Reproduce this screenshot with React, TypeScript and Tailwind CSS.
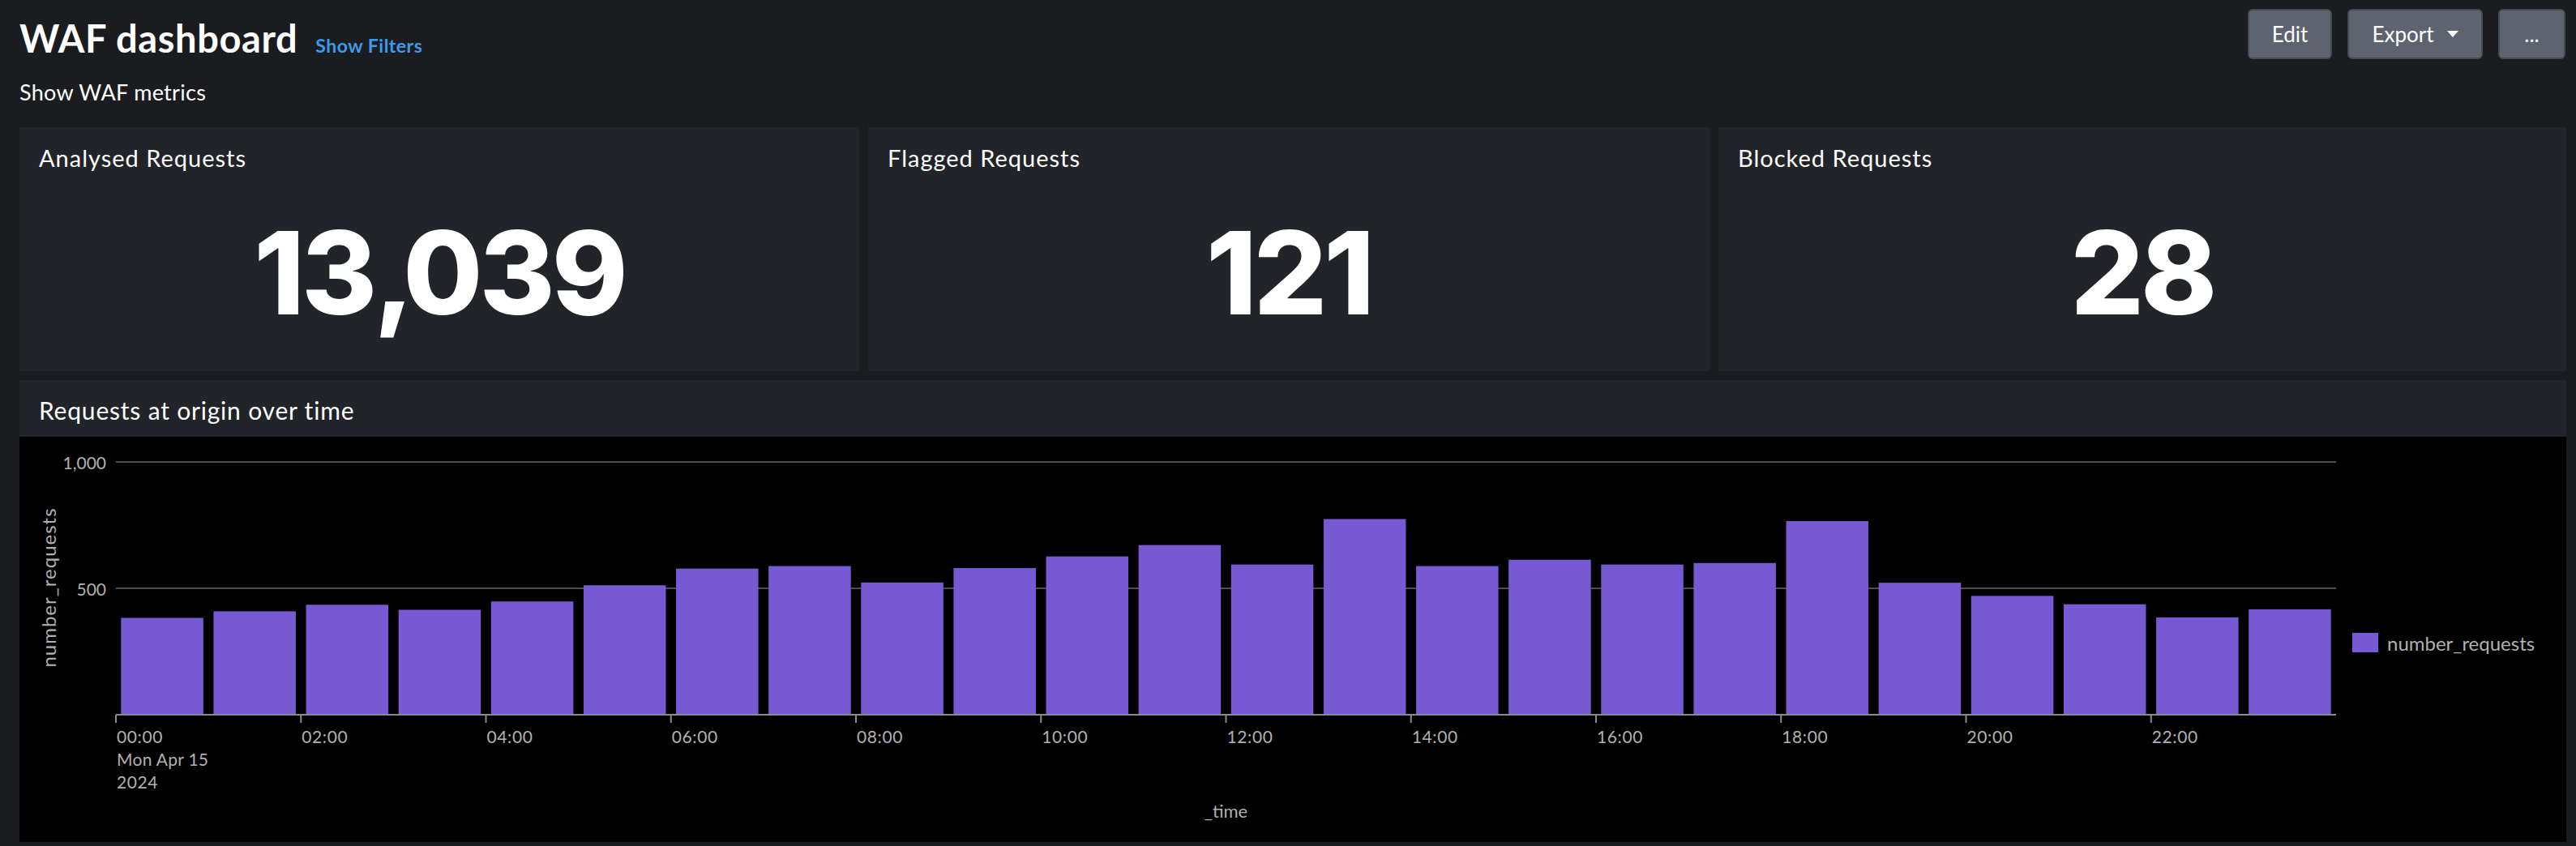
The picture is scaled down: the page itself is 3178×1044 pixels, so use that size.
const values = [
  383, 409, 435, 415, 448, 512, 578, 588, 523, 580, 626, 671, 594, 774, 588,
  613, 594, 600, 766, 522, 470, 437, 385, 417,
];

const stats = [
  { title: "Analysed Requests", value: "13,039" },
  { title: "Flagged Requests", value: "121" },
  { title: "Blocked Requests", value: "28" },
];

const RequestsChart = () => {
  const x0 = 119;
  const x1 = 2858;
  const yTop = 31;
  const yBase = 343;
  const pitch = (x1 - x0) / values.length;
  const k = (yBase - yTop) / 1000;
  const barPad = 6.3;
  const ticks = Array.from({ length: 12 }, (_, i) => i);

  return (
    <svg viewBox="0 0 3142 500" className="block w-full h-full">
      {/* grid */}
      <line x1={x0} x2={x1} y1={yTop} y2={yTop} stroke="#4e4e4e" strokeWidth={2} />
      <line x1={x0} x2={x1} y1={yBase - 500 * k} y2={yBase - 500 * k} stroke="#4e4e4e" strokeWidth={2} />

      <text x={107} y={40} textAnchor="end" fontSize={21} fill="#b0b0b0">
        1,000
      </text>
      <text x={107} y={196} textAnchor="end" fontSize={21} fill="#b0b0b0">
        500
      </text>

      <text
        x={0}
        y={0}
        transform="translate(45 186) rotate(-90)"
        textAnchor="middle"
        fontSize={24}
        letterSpacing={1}
        fill="#b0b0b0"
      >
        number_requests
      </text>

      {values.map((v, i) => (
        <rect
          key={i}
          x={x0 + i * pitch + barPad}
          y={yBase - v * k}
          width={pitch - barPad * 2}
          height={v * k}
          fill="#7759d3"
        />
      ))}

      <line x1={x0} x2={x1} y1={yBase} y2={yBase} stroke="#8a8a8a" strokeWidth={2} />

      {ticks.map((t) => {
        const x = x0 + t * 2 * pitch;
        return (
          <g key={t}>
            <line x1={x} x2={x} y1={yBase} y2={yBase + 10} stroke="#8a8a8a" strokeWidth={2} />
            <text x={x + 1} y={378} fontSize={21} letterSpacing={0.6} fill="#b0b0b0">
              {String(t * 2).padStart(2, "0")}:00
            </text>
          </g>
        );
      })}
      <text x={x0 + 1} y={406} fontSize={21} letterSpacing={0.3} fill="#b0b0b0">
        Mon Apr 15
      </text>
      <text x={x0 + 1} y={434} fontSize={21} letterSpacing={0.6} fill="#b0b0b0">
        2024
      </text>

      <text x={(x0 + x1) / 2} y={470} textAnchor="middle" fontSize={22} fill="#b0b0b0">
        _time
      </text>

      {/* legend */}
      <rect x={2878} y={242} width={32} height={24} fill="#7759d3" />
      <text x={2921} y={264} fontSize={24} fill="#b0b0b0">
        number_requests
      </text>
    </svg>
  );
};

const BigValue = ({ value }: { value: string }) => {
  const parts = value.split(",");
  return (
    <>
      {parts.map((p, i) => (
        <span key={i}>
          {i > 0 && <span className="tracking-[-14px]">,</span>}
          {p}
        </span>
      ))}
    </>
  );
};

export default function App() {
  return (
    <div className="min-h-screen w-full bg-[#1a1c20] pl-[24px] pr-[12px] text-white font-[Lato,sans-serif]">
      <div className="flex justify-between items-start">
        <div className="pt-[20px]">
          <div className="flex items-baseline">
            <h1 className="text-[47px] leading-[55px] font-bold tracking-[0.6px]">WAF dashboard</h1>
            <button className="ml-[22px] text-[23px] font-bold tracking-[0.5px] text-[#3d9ae8]">
              Show Filters
            </button>
          </div>
          <p className="mt-[22px] text-[27px] leading-[34px] tracking-[0.3px]">Show WAF metrics</p>
        </div>

        <div className="flex gap-[19px] pt-[11px] pr-[1px]">
          <button className="w-[104px] h-[62px] rounded-[6px] bg-[#5d6470] border-2 border-[#454b54] text-[26px]">
            Edit
          </button>
          <button className="w-[167px] h-[62px] rounded-[6px] bg-[#5d6470] border-2 border-[#454b54] text-[26px] flex items-center justify-center gap-[16px]">
            <span>Export</span>
            <svg width="14" height="8" viewBox="0 0 14 8">
              <path d="M0 0 H14 L7 8 Z" fill="#ffffff" />
            </svg>
          </button>
          <button className="w-[83px] h-[62px] rounded-[6px] bg-[#5d6470] border-2 border-[#454b54] text-[26px]">
            ...
          </button>
        </div>
      </div>

      <div className="mt-[26px] grid grid-cols-[1036px_1038px_1fr] gap-[11px]">
        {stats.map((s) => (
          <div key={s.title} className="h-[301px] bg-[#212428] px-[24px] pt-[21px]">
            <h2 className="text-[29px] leading-[34px] tracking-[1px]">{s.title}</h2>
            <div className="mt-[38px] text-center text-[142px] leading-[172px] font-extrabold font-[Inter,sans-serif] tracking-[-4px]">
              <BigValue value={s.value} />
            </div>
          </div>
        ))}
      </div>

      <div className="mt-[11px] bg-[#212428]">
        <div className="h-[70px] px-[24px] pt-[20px]">
          <h2 className="text-[30px] leading-[35px] tracking-[0.8px]">Requests at origin over time</h2>
        </div>
        <div className="h-[500px] bg-black">
          <RequestsChart />
        </div>
      </div>
    </div>
  );
}
